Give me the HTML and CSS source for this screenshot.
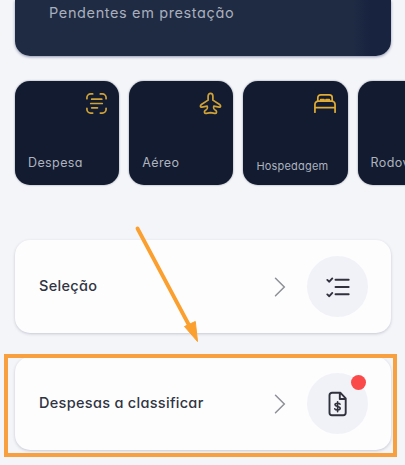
FILE: index.html
```
<!DOCTYPE html>
<html lang="pt-BR">
<head>
<meta charset="utf-8">
<title>Despesas</title>
<link rel="stylesheet" href="styles.css">
</head>
<body>
<main class="screen">
  <section class="summary"><span class="summary-text">Pendentes em prestação</span></section>
  <nav class="tiles">
    <a class="tile">
      <svg class="tile-icon" viewBox="0 0 24 24"><path d="M2 7V6a4 4 0 0 1 4-4h2M16 2h2a4 4 0 0 1 4 4v1M22 17v1a4 4 0 0 1-4 4h-2M8 22H6a4 4 0 0 1-4-4v-1M7 7.500h10.500M6 12h12M7 16.500h6"/></svg>
      <span class="tile-label">Despesa</span>
    </a>
    <a class="tile">
      <svg class="tile-icon" viewBox="0 0 24 24"><path d="M9.500 4.500C9.500 0.400 14.500 0.400 14.500 4.500V8.500L21.500 13C23 14.200 22.800 16 21 15.700L15.500 14.700C14.700 17 15 17.800 17.500 19.200C18.800 20.500 18.500 22.500 16.500 22.300L12 21.500L7.500 22.300C5.500 22.500 5.200 20.500 6.500 19.200C9 17.800 9.300 17 8.500 14.700L3 15.700C1.200 16 1 14.200 2.500 13L9.500 8.500Z"/></svg>
      <span class="tile-label">Aéreo</span>
    </a>
    <a class="tile">
      <svg class="tile-icon bed" viewBox="0 0 24 24"><path d="M1.500 21V13A3.500 3.500 0 0 1 5 9.500h14a3.500 3.500 0 0 1 3.500 3.500V21M1.500 16.200h21M4.500 9.500V6a3 3 0 0 1 3-3h9a3 3 0 0 1 3 3v3.500M7.500 9V8h3.500V9M13 9V8h3.500V9"/></svg>
      <span class="tile-label small">Hospedagem</span>
    </a>
    <a class="tile"><span class="tile-label">Rodoviário</span></a>
  </nav>
  <section class="list">
    <a class="row">
      <span class="row-title">Seleção</span>
      <svg class="chevron" viewBox="0 0 12 20"><path d="M1.500 1.200 10.300 10l-8.800 8.800"/></svg>
      <span class="badge">
        <svg class="row-icon" viewBox="0 0 26 26"><path d="M10.500 5.800h13.200M10.500 13h13.200M10.500 20.300h13.200M2.300 5.900l2 1.800 3-3.300M2.300 20.400l2 1.800 3-3.300"/></svg>
      </span>
    </a>
    <a class="row">
      <span class="row-title">Despesas a classificar</span>
      <svg class="chevron" viewBox="0 0 12 20"><path d="M1.500 1.200 10.300 10l-8.800 8.800"/></svg>
      <span class="badge">
        <svg class="row-icon" viewBox="0 0 26 26"><path d="M7 1.800h8.500l5.200 5.500v14.400a2.500 2.500 0 0 1-2.500 2.500H7a2.500 2.500 0 0 1-2.500-2.500V4.300A2.500 2.500 0 0 1 7 1.800ZM14.800 2v6h5.800"/><path class="dollar" d="M15 13.200c-.6-1.200-5-1.500-5 .6 0 2.200 5.200 1.200 5.200 3.500 0 2.200-4.600 2-5.400.5M12.600 10.800v10"/></svg>
        <i class="dot"></i>
      </span>
    </a>
  </section>
  <div class="highlight"></div>
  <svg class="arrow" viewBox="0 0 70 120"><path class="shaft" d="M7.500 8.500 60 107"/><path class="head" d="M54.500 106.500 65.300 101.500 67.500 121.500Z"/></svg>
</main>
</body>
</html>
```
FILE: styles.css
```
* { box-sizing: border-box; }
body {
  margin: 0;
  background: #f4f5f8;
  font-family: Inter, "Open Sans", sans-serif;
  font-feature-settings: "cv11";
}
.screen {
  position: relative;
  width: 405px;
  height: 465px;
  overflow: hidden;
  padding-left: 15px;
}
.summary {
  width: 376px;
  height: 56px;
  padding: 3px 0 0 34px;
  border-radius: 0 0 15px 15px;
  background: linear-gradient(90deg, #1f2b43 0, #1f2b43 338px, #17233f 356px);
  box-shadow: 0 1px 3px #8e95b2;
  color: #a9afbd;
}
.summary-text { display: block; font-size: 14.500px; line-height: 20px; letter-spacing: 0.620px; white-space: nowrap; }
.tiles { display: flex; gap: 10px; margin-top: 25px; }
.tile {
  flex: 0 0 104.200px;
  height: 104px;
  padding: 11px 11px 12px 13px;
  display: flex;
  flex-direction: column;
  justify-content: space-between;
  border-radius: 15px;
  background: #121b30;
  box-shadow: 0 0 2px #7d8495;
}
.tile-icon { width: 23px; height: 23px; align-self: flex-end; fill: none; stroke: #cfa238; stroke-width: 1.800; stroke-linecap: round; stroke-linejoin: round; }
.tile-icon.bed { width: 24px; stroke: #e0ac34; }
.tile-label { margin-top: auto; color: #aeb3bf; font-size: 12.500px; line-height: 20px; letter-spacing: 0.400px; white-space: nowrap; }
.tile-label.small { font-size: 11px; line-height: 14px; letter-spacing: 0.200px; }
.list { display: flex; flex-direction: column; gap: 24px; margin-top: 55px; }
.row {
  width: 376px;
  height: 93px;
  padding: 0 23px 0 24px;
  display: flex;
  align-items: center;
  border-radius: 15px;
  background: #fdfdfe;
  box-shadow: 0 1px 3px #c6c7d4;
}
.row-title { flex: 1; padding-bottom: 2px; color: #303442; font-size: 14.500px; font-weight: 500; line-height: 20px; letter-spacing: 0.300px; white-space: nowrap; }
.chevron { width: 12px; height: 20px; margin-right: 21px; fill: none; stroke: #8e9096; stroke-width: 1.500; stroke-linecap: round; }
.badge { position: relative; width: 61px; height: 61px; border-radius: 50%; background: #f1f2f7; display: flex; align-items: center; justify-content: center; }
.row-icon { width: 26px; height: 26px; fill: none; stroke: #30313d; stroke-width: 1.900; stroke-linecap: round; stroke-linejoin: round; }
.dollar { stroke-width: 1.600; }
.dot { position: absolute; top: 2px; right: 2px; width: 15px; height: 15px; border-radius: 50%; background: #fb4a4a; }
.highlight { position: absolute; left: 4px; top: 354px; width: 393px; height: 103px; border: 4px solid #f8a040; }
.arrow { position: absolute; left: 130px; top: 220px; width: 70px; height: 120px; overflow: visible; }
.shaft { stroke: #fba02f; stroke-width: 3.800; stroke-linecap: round; }
.head { fill: #fba02f; stroke: #fba02f; stroke-width: 1; }
```
